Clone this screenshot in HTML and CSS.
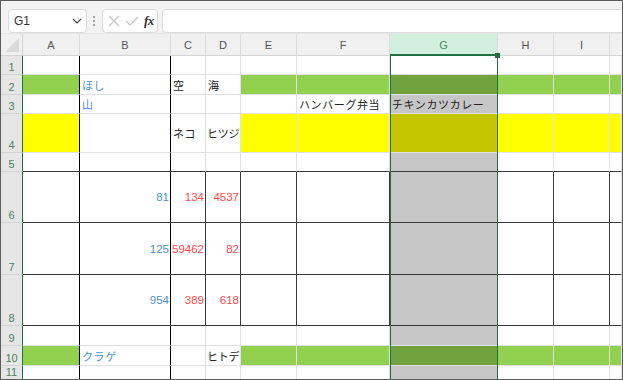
FILE: index.html
```html
<!DOCTYPE html>
<html lang="ja">
<head>
    <meta charset="UTF-8" />
    <title>Book1 - Excel</title>
    <link rel="stylesheet" href="styles.css">
</head>
<body>
<div class="window">
    <!-- Formula bar -->
    <div class="toolbar">
        <div class="name-box">
            <span>G1</span>
            <svg width="10" height="6" viewBox="0 0 10 6"><path d="M1 1 L5 5 L9 1" fill="none" stroke="#444" stroke-width="1.2"/></svg>
        </div>
        <svg class="grip" width="4" height="12" viewBox="0 0 4 12"><circle cx="2" cy="2" r="1" fill="#888"/><circle cx="2" cy="6" r="1" fill="#888"/><circle cx="2" cy="10" r="1" fill="#888"/></svg>
        <div class="fx-box">
            <svg width="12" height="12" viewBox="0 0 12 12"><path d="M1 1 L11 11 M11 1 L1 11" stroke="#c4c4c4" stroke-width="1.2"/></svg>
            <svg width="14" height="12" viewBox="0 0 14 12"><path d="M1 6 L5 10 L13 2" fill="none" stroke="#c4c4c4" stroke-width="1.2"/></svg>
            <span class="fx">fx</span>
        </div>
        <div class="formula"></div>
    </div>

    <!-- Sheet -->
    <div class="sheet">
        <div class="corner"><span class="tri"></span></div>
        <div class="ch">A</div>
        <div class="ch">B</div>
        <div class="ch">C</div>
        <div class="ch">D</div>
        <div class="ch">E</div>
        <div class="ch">F</div>
        <div class="ch sel">G</div>
        <div class="ch">H</div>
        <div class="ch">I</div>
        <div class="ch last"></div>

        <!-- row 1 -->
        <div class="rh">1</div>
        <div class="c ka"></div><div class="c ka"></div><div class="c"></div><div class="c"></div><div class="c"></div><div class="c"></div>
        <div class="c active"></div><div class="c"></div><div class="c"></div><div class="c"></div>

        <!-- row 2 -->
        <div class="rh">2</div>
        <div class="c ka green"></div><div class="c ka blue">ほし</div><div class="c jp">空</div><div class="c jp">海</div>
        <div class="c green"></div><div class="c green"></div><div class="c sgreen"></div><div class="c green"></div><div class="c green"></div><div class="c green"></div>

        <!-- row 3 -->
        <div class="rh">3</div>
        <div class="c ka"></div><div class="c ka blue">山</div><div class="c"></div><div class="c"></div><div class="c"></div>
        <div class="c jp">ハンバーグ弁当</div><div class="c sgray jp">チキンカツカレー</div><div class="c"></div><div class="c"></div><div class="c"></div>

        <!-- row 4 -->
        <div class="rh">4</div>
        <div class="c ka yellow"></div><div class="c ka"></div><div class="c jp">ネコ</div><div class="c jp tight">ヒツジ</div>
        <div class="c yellow"></div><div class="c yellow"></div><div class="c syellow"></div><div class="c yellow"></div><div class="c yellow"></div><div class="c yellow"></div>

        <!-- row 5 -->
        <div class="rh">5</div>
        <div class="c ka db"></div><div class="c ka db"></div><div class="c db"></div><div class="c db"></div><div class="c db"></div><div class="c db"></div>
        <div class="c sgray db"></div><div class="c db"></div><div class="c db"></div><div class="c db"></div>

        <!-- row 6 -->
        <div class="rh">6</div>
        <div class="c ka db"></div><div class="c ka db num blue">81</div><div class="c dk db num red">134</div><div class="c dk db num red">4537</div>
        <div class="c dk db"></div><div class="c dk db"></div><div class="c dk db sgray"></div><div class="c dk db"></div><div class="c dk db"></div><div class="c db"></div>

        <!-- row 7 -->
        <div class="rh">7</div>
        <div class="c ka db"></div><div class="c ka db num blue">125</div><div class="c dk db num red">59462</div><div class="c dk db num red">82</div>
        <div class="c dk db"></div><div class="c dk db"></div><div class="c dk db sgray"></div><div class="c dk db"></div><div class="c dk db"></div><div class="c db"></div>

        <!-- row 8 -->
        <div class="rh">8</div>
        <div class="c ka db"></div><div class="c ka db num blue">954</div><div class="c dk db num red">389</div><div class="c dk db num red">618</div>
        <div class="c dk db"></div><div class="c dk db"></div><div class="c dk db sgray"></div><div class="c dk db"></div><div class="c dk db"></div><div class="c db"></div>

        <!-- row 9 -->
        <div class="rh">9</div>
        <div class="c ka"></div><div class="c ka"></div><div class="c"></div><div class="c"></div><div class="c"></div><div class="c"></div>
        <div class="c sgray"></div><div class="c"></div><div class="c"></div><div class="c"></div>

        <!-- row 10 -->
        <div class="rh">10</div>
        <div class="c ka green"></div><div class="c ka blue">クラゲ</div><div class="c"></div><div class="c jp tight">ヒトデ</div>
        <div class="c green"></div><div class="c green"></div><div class="c sgreen"></div><div class="c green"></div><div class="c green"></div><div class="c green"></div>

        <!-- row 11 -->
        <div class="rh">11</div>
        <div class="c ka"></div><div class="c ka"></div><div class="c"></div><div class="c"></div><div class="c"></div><div class="c"></div>
        <div class="c sgray"></div><div class="c"></div><div class="c"></div><div class="c"></div>

        <!-- column G selection outline -->
        <div class="selection"><span class="handle"></span></div>
    </div>
</div>
</body>
</html>
```

FILE: styles.css
```css
/* Global */
*,
*::before,
*::after {
    box-sizing: border-box;
}

html,
body {
    margin: 0;
    padding: 0;
}

body {
    font-family: 'Liberation Sans', Arial, sans-serif;
    background: #ffffff;
}

.window {
    width: 623px;
    height: 380px;
    border: 1px solid #5c5c5c;
    background: #f3f3f3;
    overflow: hidden;
    display: flex;
    flex-direction: column;
}

/* Formula bar */
.toolbar {
    height: 35px;
    display: flex;
    align-items: flex-start;
    padding: 8px 0 0 7px;
    border-bottom: 1px solid #e6e6e6;
}

.name-box {
    width: 79px;
    height: 24px;
    background: #fff;
    border: 1px solid #dcdcdc;
    border-radius: 4px;
    display: flex;
    align-items: center;
    justify-content: space-between;
    padding: 0 4px 0 5px;
    font-size: 12px;
    color: #333;
}

.grip {
    margin: 6px 6px 0 5px;
}

.fx-box {
    width: 56px;
    height: 24px;
    background: #fff;
    border: 1px solid #dcdcdc;
    border-radius: 4px;
    display: flex;
    align-items: center;
    gap: 5px;
    padding-left: 5px;
}

.fx {
    font-family: 'Liberation Serif', 'Times New Roman', serif;
    font-style: italic;
    font-weight: bold;
    font-size: 13px;
    color: #333;
    letter-spacing: -0.5px;
}

.formula {
    flex: 1;
    height: 24px;
    margin-left: 4px;
    background: #fff;
    border: 1px solid #dcdcdc;
    border-right: none;
    border-radius: 4px 0 0 4px;
}

/* Sheet grid */
.sheet {
    position: relative;
    flex: 1;
    background: #fff;
    display: grid;
    grid-template-columns: 22px 57px 91px 35px 35px 56px 93px 108px 56px 56px 1fr;
    grid-template-rows: 22px 19px 20px 19px 39px 19px 51px 52px 51px 20px 20px 1fr;
}

.corner {
    position: relative;
    background: #f0f0f0;
    border-right: 1px solid #d4d4d4;
    border-bottom: 1px solid #d4d4d4;
}

.tri {
    position: absolute;
    right: 3px;
    bottom: 3px;
    width: 0;
    height: 0;
    border-left: 14px solid transparent;
    border-bottom: 14px solid #dadada;
}

.ch {
    background: #f0f0f0;
    border-right: 1px solid #dadada;
    border-bottom: 1px solid #d4d4d4;
    color: #555;
    font-size: 11px;
    display: flex;
    align-items: center;
    justify-content: center;
    padding-top: 1px;
}

.ch.sel {
    background: #d3f0de;
    color: #3f8a5c;
    border-bottom: 2px solid #217346;
}

.ch.last {
    border-right: none;
}

.rh {
    background: #e6e6e6;
    border-right: 1px solid #217346;
    border-bottom: 1px solid #d4d4d4;
    color: #4f8063;
    font-size: 11px;
    display: flex;
    align-items: flex-end;
    justify-content: center;
    padding-bottom: 1px;
}

.c {
    border-right: 1px solid #e1e1e1;
    border-bottom: 1px solid #e1e1e1;
    font-size: 11px;
    color: #222;
    display: flex;
    align-items: center;
    padding: 0 2px;
    white-space: nowrap;
    overflow: hidden;
}

.jp,
.blue {
    font-family: 'Noto Sans CJK JP', sans-serif;
    letter-spacing: 0.6px;
}

.jp.tight {
    letter-spacing: -0.2px;
    padding-left: 1px;
}

.blue {
    color: #4a8fd8;
}

.num {
    justify-content: flex-end;
    font-family: 'Liberation Sans', Arial, sans-serif;
    font-size: 11.5px;
    letter-spacing: 0;
    padding-right: 1px;
}

.red {
    color: #ff4b4b;
}

/* borders */
.ka {
    border-right: 1px solid #000;
}

.dk {
    border-right: 1px solid #3a3a3a;
}

.db {
    border-bottom: 1px solid #3a3a3a;
}

/* fills */
.green {
    background: #92d050;
}

.yellow {
    background: #ffff00;
}

.sgray {
    background: #c6c6c6;
}

.sgreen {
    background: #70a33e;
}

.syellow {
    background: #c6c600;
}

/* selection over column G */
.selection {
    position: absolute;
    left: 389px;
    top: 21px;
    width: 108px;
    bottom: 0;
    border: 1px solid #1f6e43;
    border-bottom: none;
    pointer-events: none;
}

.handle {
    position: absolute;
    right: -3px;
    top: -3px;
    width: 5px;
    height: 5px;
    background: #1f6e43;
}
```
